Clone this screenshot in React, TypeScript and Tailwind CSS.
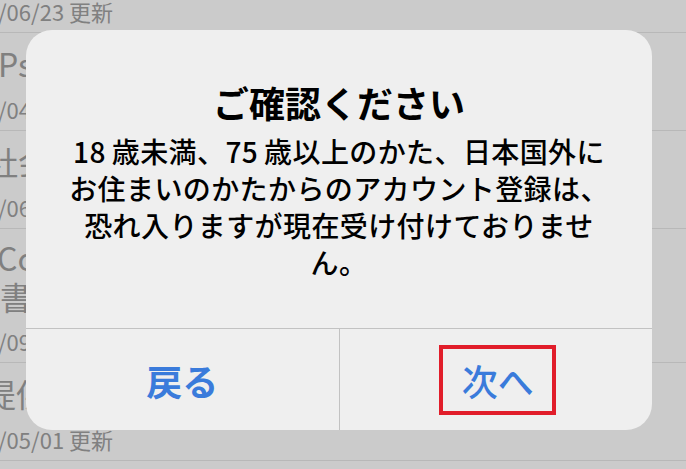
const font = { fontFamily: '"Noto Sans CJK JP", "Noto Sans", sans-serif' };

type Row = { title: string[]; date: string; shift: string };

const rows: Row[] = [
  { title: ["Psychology Today"], date: "/04/15 更新", shift: "-ml-[2px]" },
  { title: ["社会保険のお知らせ"], date: "/06/02 更新", shift: "-ml-[14px]" },
  { title: ["Company Profile", "書"], date: "/09/30 更新", shift: "-ml-[3px]" },
  { title: ["提供サービス一覧"], date: "/05/01 更新", shift: "-ml-[16px]" },
];

function ListRow({ row }: { row: Row }) {
  const two = row.title.length > 1;
  return (
    <div className="border-b border-[#b8b8b8] pt-[9px] pb-[8px] overflow-hidden whitespace-nowrap">
      {row.title.map((t, i) => (
        <div
          key={i}
          className={`text-[32px] text-[#808080] ${two ? "leading-[39px]" : "leading-[42px]"} ${i === 1 ? "" : row.shift}`}
        >
          {t}
        </div>
      ))}
      <div className="mt-[12px] text-[22px] leading-[26px] text-[#808080] -ml-[2px]">{row.date}</div>
    </div>
  );
}

export default function App() {
  return (
    <div className="relative w-[686px] h-[469px] overflow-hidden bg-[#cbcbcb]" style={font}>
      <div className="h-[33px] border-b border-[#b8b8b8] text-[22px] leading-[22px] text-[#808080] -ml-[2px] overflow-hidden whitespace-nowrap">
        /06/23 更新
      </div>
      {rows.map((r, i) => (
        <ListRow key={i} row={r} />
      ))}

      {/* alert overlay */}
      <div className="absolute left-[26px] top-[30px] w-[626px] h-[400px] rounded-[26px] bg-[#efefef] flex flex-col overflow-hidden">
        <div className="flex-1 flex flex-col items-center pt-[50px]">
          <div className="text-[36px] leading-[44px] font-bold text-black">ご確認ください</div>
          <div className="mt-[9px] text-center text-[28px] leading-[37px] font-medium tracking-[0.4px] text-black">
            18<span className="ml-[6px]" />歳未満、75<span className="ml-[6px]" />歳以上のかた、日本国外に
            <br />
            お住まいのかたからのアカウント登録は、
            <br />
            恐れ入りますが現在受け付けておりませ
            <br />
            ん。
          </div>
        </div>
        <div className="h-[102px] border-t border-[#c2c2c2] flex">
          <div className="flex-1 flex items-center justify-center border-r border-[#c2c2c2]">
            <span className="text-[36px] leading-[40px] font-bold text-[#3a7bdb]">戻る</span>
          </div>
          <div className="flex-1 flex items-center justify-center">
            <span className="w-[117px] h-[70px] border-[4px] border-[#e11d2a] flex items-center justify-center text-[36px] leading-[40px] font-medium text-[#3a7bdb] translate-x-[2px]">
              次へ
            </span>
          </div>
        </div>
      </div>
    </div>
  );
}
